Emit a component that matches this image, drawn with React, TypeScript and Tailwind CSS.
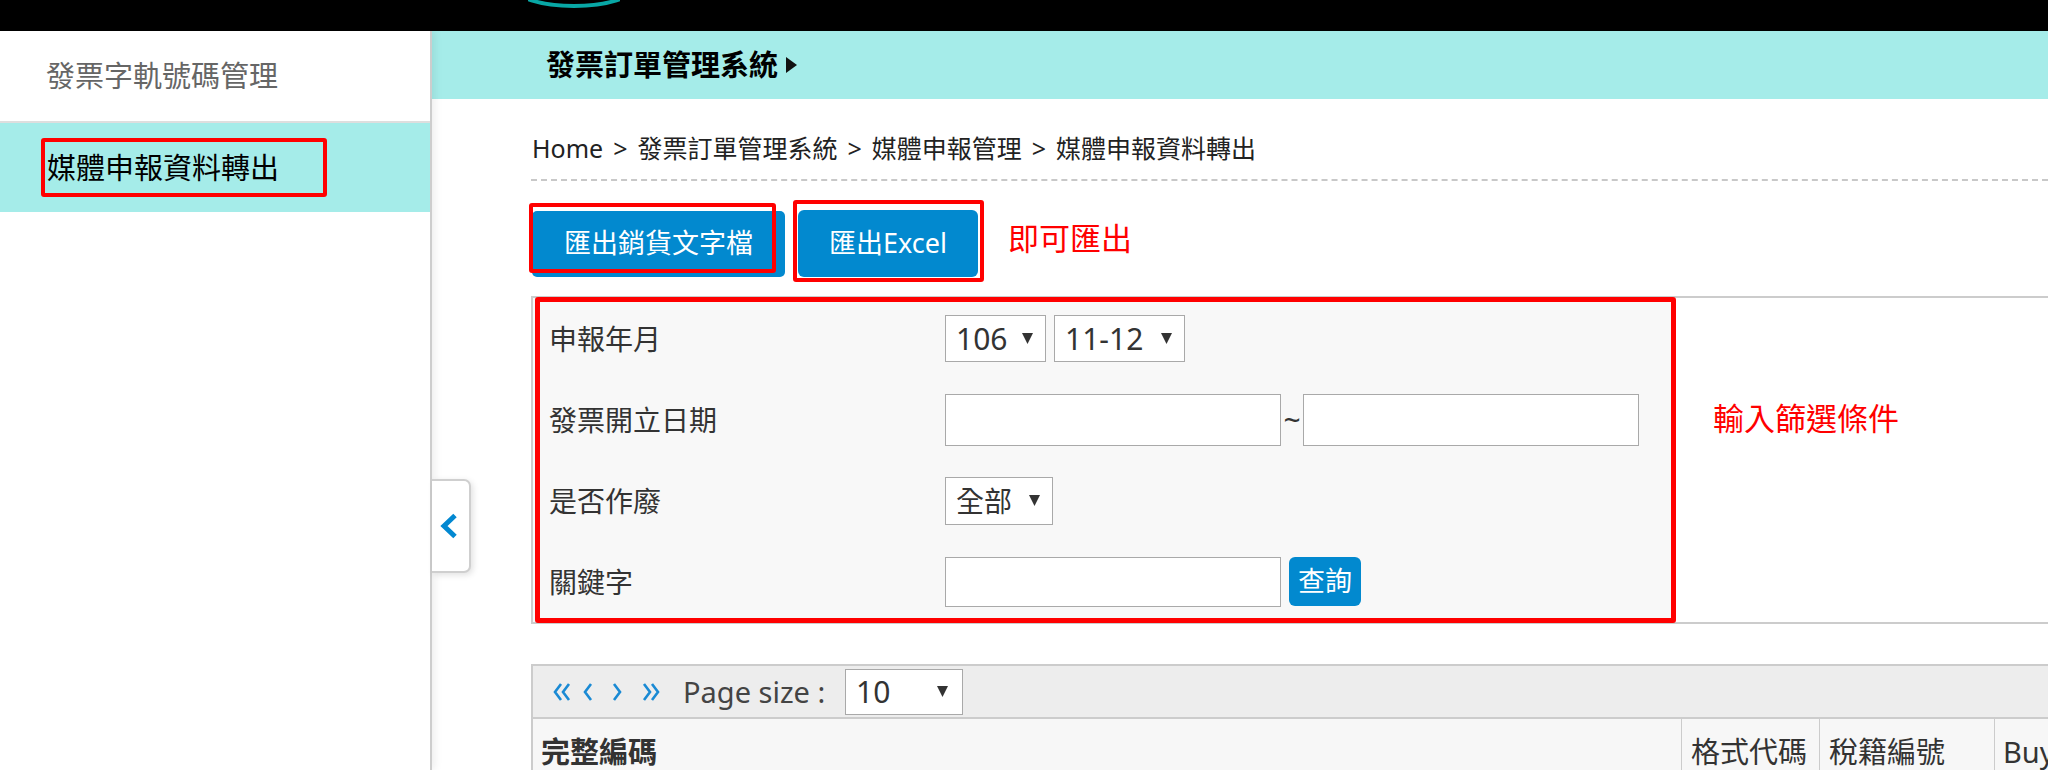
import React from "react"

const blue = "bg-[#0289cf]"

function Arrow() {
  return (
    <svg width="11" height="11" viewBox="0 0 11 11" className="shrink-0">
      <polygon points="0,0 11,0 5.5,11" fill="#333" />
    </svg>
  )
}

function FakeSelect({ value, width, height, size }: { value: string; width: string; height: string; size: string }) {
  return (
    <div className={`flex items-center justify-between border border-[#a9a9a9] bg-white pl-[10px] pr-[12px] text-[#333] ${width} ${height} ${size}`}>
      <span>{value}</span>
      <Arrow />
    </div>
  )
}

function Sidebar() {
  return (
    <aside className="relative z-10 w-[432px] shrink-0 border-r-2 border-[#cdcdcd] bg-white shadow-[3px_0_8px_rgba(0,0,0,0.07)]">
      <div className="flex h-[92px] items-center border-b-2 border-[#dedede] pl-[46px] text-[29px] text-[#666]">
        發票字軌號碼管理
      </div>
      <div className="flex h-[89px] items-center bg-[#a5ece9] pl-[41px]">
        <div className="flex h-[59px] w-[286px] items-center rounded-[3px] border-4 border-[#ff0000] pl-[2px] text-[29px] text-black">
          媒體申報資料轉出
        </div>
      </div>
    </aside>
  )
}

function FilterBox() {
  return (
    <div className="mt-[19px] flex h-[328px] border-y-2 border-l-2 border-[#cccccc]">
      <div className="relative w-[1143px] shrink-0 bg-[#f8f8f8] pl-[16px]">
        <div className="flex h-[81px] items-center">
          <div className="w-[396px] text-[28px] text-[#333]">申報年月</div>
          <div className="flex gap-[8px]">
            <FakeSelect value="106" width="w-[101px]" height="h-[47px]" size="text-[30px]" />
            <FakeSelect value="11-12" width="w-[131px]" height="h-[47px]" size="text-[30px]" />
          </div>
        </div>
        <div className="flex h-[81px] items-center">
          <div className="w-[396px] text-[28px] text-[#333]">發票開立日期</div>
          <div className="h-[52px] w-[336px] border border-[#a9a9a9] bg-white" />
          <span className="w-[22px] text-center text-[30px] leading-[30px] text-[#333]">~</span>
          <div className="h-[52px] w-[336px] border border-[#a9a9a9] bg-white" />
        </div>
        <div className="flex h-[81px] items-center">
          <div className="w-[396px] text-[28px] text-[#333]">是否作廢</div>
          <FakeSelect value="全部" width="w-[108px]" height="h-[48px]" size="text-[28px]" />
        </div>
        <div className="flex h-[81px] items-center">
          <div className="w-[396px] text-[28px] text-[#333]">關鍵字</div>
          <div className="h-[50px] w-[336px] border border-[#a9a9a9] bg-white" />
          <button className={`ml-[8px] h-[49px] w-[72px] rounded-[6px] ${blue} text-[27px] text-white`}>查詢</button>
        </div>
        <div className="pointer-events-none absolute -top-[1px] -bottom-[1px] left-[2px] right-0 rounded-[3px] border-[5px] border-[#ff0000]" />
      </div>
      <div className="flex-1 bg-white pl-[37px] pt-[100px] text-[31px] leading-[40px] text-[#ff0000]">輸入篩選條件</div>
    </div>
  )
}

function Chevron({ dir, double }: { dir: "left" | "right"; double?: boolean }) {
  const one = dir === "left" ? "M8 1 L2 9 L8 17" : "M2 1 L8 9 L2 17"
  const two = dir === "left" ? "M16 1 L10 9 L16 17" : "M10 1 L16 9 L10 17"
  return (
    <svg width={double ? 18 : 10} height="18" viewBox={double ? "0 0 18 18" : "0 0 10 18"} className="shrink-0">
      <path d={one} fill="none" stroke="#1a8ad4" strokeWidth="2.6" />
      {double && <path d={two} fill="none" stroke="#1a8ad4" strokeWidth="2.6" />}
    </svg>
  )
}

function Pager() {
  return (
    <div className="mt-[40px] flex h-[55px] items-center border-y-2 border-l-2 border-[#cccccc] bg-[#ededed] pl-[20px]">
      <Chevron dir="left" double />
      <span className="ml-[12px]"><Chevron dir="left" /></span>
      <span className="ml-[19px]"><Chevron dir="right" /></span>
      <span className="ml-[20px]"><Chevron dir="right" double /></span>
      <span className="ml-[23px] w-[162px] text-[29px] text-[#444]">Page size :</span>
      <div className="flex h-[46px] w-[118px] items-center justify-between border border-[#a9a9a9] bg-white pl-[10px] pr-[14px] text-[30px] text-[#333]">
        <span>10</span>
        <Arrow />
      </div>
    </div>
  )
}

function TableHead() {
  return (
    <div className="flex h-[60px] border-l-2 border-[#cccccc] bg-[#f7f7f7] text-[29px] leading-[36px] text-[#333]">
      <div className="w-[1148px] shrink-0 pl-[8px] pt-[15px] font-bold">完整編碼</div>
      <div className="w-[138px] shrink-0 border-l border-[#cccccc] pl-[9px] pt-[15px]">格式代碼</div>
      <div className="w-[175px] shrink-0 border-l border-[#cccccc] pl-[9px] pt-[15px]">稅籍編號</div>
      <div className="flex-1 overflow-hidden whitespace-nowrap border-l border-[#cccccc] pl-[8px] pt-[15px]">Buyer</div>
    </div>
  )
}

export default function App() {
  return (
    <div className="relative h-[770px] w-[2048px] overflow-hidden bg-white font-['Noto_Sans','Noto_Sans_CJK_TC',sans-serif]">
      <div className="h-[31px] bg-black pl-[528px]">
        <svg width="92" height="31" viewBox="0 0 92 31">
          <ellipse cx="46" cy="-13" rx="60" ry="19" fill="none" stroke="#08a7a5" strokeWidth="4" />
        </svg>
      </div>
      <div className="flex h-[739px]">
        <Sidebar />
        <main className="min-w-0 flex-1">
          <div className="flex h-[68px] items-center bg-[#a5ece9] pl-[114px]">
            <span className="text-[29px] font-bold text-black">發票訂單管理系統</span>
            <svg width="11" height="16" viewBox="0 0 11 16" className="ml-[8px]">
              <polygon points="0,0 11,8 0,16" fill="#111" />
            </svg>
          </div>
          <div className="pl-[99px]">
            <div className="flex border-b-2 border-dashed border-[#c8c8c8] pb-[15px] pl-[1px] pt-[33px] text-[25px] leading-[32px] text-[#222]">
              <span>Home</span>
              <span className="mx-[10px]">&gt;</span>
              <span>發票訂單管理系統</span>
              <span className="mx-[10px]">&gt;</span>
              <span>媒體申報管理</span>
              <span className="mx-[10px]">&gt;</span>
              <span>媒體申報資料轉出</span>
            </div>
            <div className="mt-[29px] flex items-center pl-[1px]">
              <button className={`relative h-[66px] w-[253px] rounded-[5px] ${blue} text-[27px] text-white`}>
                匯出銷貨文字檔
                <span className="absolute left-[-3px] top-[-8px] h-[70px] w-[247px] rounded-[3px] border-4 border-[#ff0000]" />
              </button>
              <button className={`relative ml-[13px] h-[67px] w-[180px] rounded-[6px] ${blue} text-[27px] text-white`}>
                匯出Excel
                <span className="absolute left-[-5px] top-[-10px] h-[82px] w-[191px] rounded-[3px] border-4 border-[#ff0000]" />
              </button>
              <span className="mb-[10px] ml-[30px] text-[31px] text-[#ff0000]">即可匯出</span>
            </div>
            <FilterBox />
            <Pager />
            <TableHead />
          </div>
        </main>
      </div>
      <div className="absolute left-[432px] top-[479px] z-20 flex h-[94px] w-[39px] items-center rounded-r-[7px] border-y-2 border-r-2 border-[#cfcfcf] bg-white pl-[7px] shadow-[2px_2px_6px_rgba(0,0,0,0.12)]">
        <svg width="18" height="26" viewBox="0 0 18 26">
          <path d="M16 2.5 L5 13 L16 23.5" fill="none" stroke="#0288d1" strokeWidth="5" />
        </svg>
      </div>
    </div>
  )
}
